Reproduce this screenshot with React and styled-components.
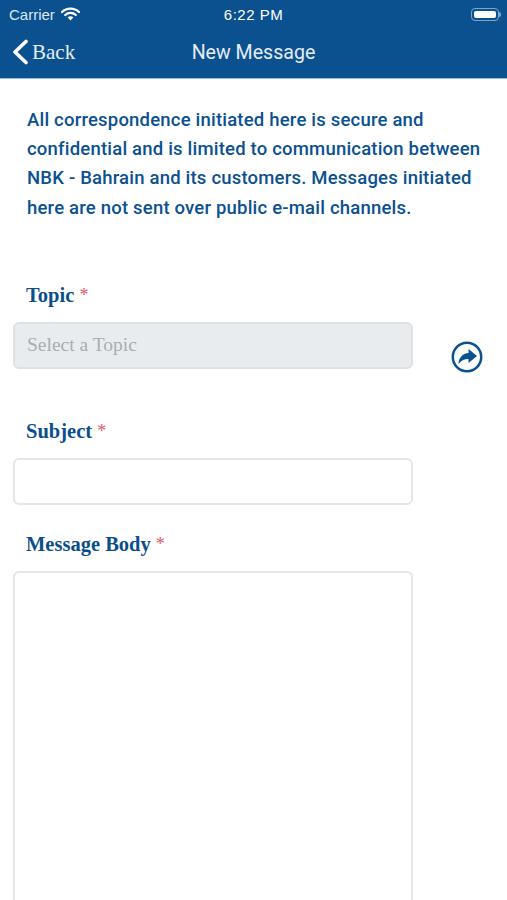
import React from 'react'
import styled, { createGlobalStyle } from 'styled-components'

const GlobalStyle = createGlobalStyle`
  html, body {
    margin: 0;
    padding: 0;
    background: #fff;
  }
`

const App = () => {
  return (
    <>
      <GlobalStyle />
      <Screen>
        <Header>
          <StatusBar>
            <Carrier>
              Carrier
              <svg width="19" height="14" viewBox="0 0 19 14">
                <path d="M1 5a12.2 12.2 0 0 1 17 0" fill="none" stroke="#fff" strokeWidth="2.2" strokeLinecap="round" />
                <path d="M4.2 8a7.6 7.6 0 0 1 10.6 0" fill="none" stroke="#fff" strokeWidth="2.2" strokeLinecap="round" />
                <path d="M6.7 10.4a3.9 3.9 0 0 1 5.6 0L9.5 13.4z" fill="#fff" />
              </svg>
            </Carrier>
            <Clock>6:22 PM</Clock>
            <Battery>
              <BatteryBody><BatteryFill /></BatteryBody>
              <BatteryCap />
            </Battery>
          </StatusBar>
          <NavBar>
            <BackLink>
              <svg width="18" height="26" viewBox="0 0 18 26">
                <path d="M15 2.5 4 13l11 10.500" fill="none" stroke="#fff" strokeWidth="3.6" strokeLinecap="round" strokeLinejoin="round" />
              </svg>
              <BackText>Back</BackText>
            </BackLink>
            <NavTitle>New Message</NavTitle>
          </NavBar>
        </Header>
        <Content>
          <Intro>
            All correspondence initiated here is secure and<br />
            confidential and is limited to communication between<br />
            NBK - Bahrain and its customers. Messages initiated<br />
            here are not sent over public e-mail channels.
          </Intro>
          <FieldLabel $top={60}>Topic <Required>*</Required></FieldLabel>
          <TopicRow>
            <TextBox as="div" $disabled>Select a Topic</TextBox>
            <GoIcon viewBox="0 0 32 32" width="32" height="32">
              <circle cx="16" cy="16" r="14.200" fill="none" stroke="#0b5190" strokeWidth="2.500" />
              <path d="M17.500 8 26 15l-8.500 7v-4c-4.500 0-7.500 1.500-10 5 0-6 4-10.500 10-11z" fill="#0b5190" />
            </GoIcon>
          </TopicRow>
          <FieldLabel $top={46}>Subject <Required>*</Required></FieldLabel>
          <TextBox />
          <FieldLabel $top={27}>Message Body <Required>*</Required></FieldLabel>
          <MessageBox />
        </Content>
      </Screen>
    </>
  )
}

export default App

const Screen = styled.div`
  width: 507px;
  height: 900px;
  overflow: hidden;
  background: #fff;
`
const Header = styled.header`
  background: #0b5190;
  border-bottom: 1px solid #8fc3e8;
  height: 78px;
`
const StatusBar = styled.div`
  display: grid;
  grid-template-columns: 1fr auto 1fr;
  align-items: center;
  height: 28px;
  padding: 0 6px;
  color: #fff;
  font-family: 'Liberation Sans', Arial, sans-serif;
`
const Carrier = styled.div`
  display: flex;
  align-items: center;
  gap: 6px;
  padding-left: 3px;
  font-size: 15px;
  color: #dce8f2;
`
const Clock = styled.div`
  font-size: 15px;
  font-weight: 500;
  letter-spacing: 0.5px;
`
const Battery = styled.div`
  justify-self: end;
  display: flex;
  align-items: center;
`
const BatteryBody = styled.div`
  box-sizing: border-box;
  width: 28px;
  height: 13px;
  padding: 2px;
  border: 1px solid #7fa3c4;
  border-radius: 4px;
`
const BatteryFill = styled.div`
  height: 100%;
  background: #fff;
  border-radius: 2px;
`
const BatteryCap = styled.div`
  width: 2px;
  height: 5px;
  background: #7fa3c4;
  border-radius: 0 2px 2px 0;
`
const NavBar = styled.div`
  display: grid;
  grid-template-columns: 1fr auto 1fr;
  align-items: center;
  height: 48px;
  color: #fff;
`
const BackLink = styled.div`
  display: flex;
  align-items: center;
  gap: 3px;
  padding-left: 11px;
`
const BackText = styled.span`
  font-family: 'Liberation Serif', 'Times New Roman', serif;
  font-size: 21px;
  color: #e4edf5;
`
const NavTitle = styled.div`
  font-family: Roboto, Arial, sans-serif;
  font-size: 19.600px;
  color: #e4edf5;
`
const Content = styled.main`
  padding: 27px 0 0 13px;
`
const Intro = styled.p`
  margin: 0 0 0 14px;
  font-family: Roboto, Arial, sans-serif;
  font-size: 18.500px;
  font-weight: 500;
  letter-spacing: 0.2px;
  line-height: 29.200px;
  color: #0b5190;
  white-space: nowrap;
`
const FieldLabel = styled.div`
  margin: ${p => p.$top}px 0 15px 13px;
  font-family: 'Liberation Serif', 'Times New Roman', serif;
  font-size: 20.500px;
  font-weight: 700;
  line-height: 24px;
  color: #0b4f8a;
`
const Required = styled.span`
  font-size: 18px;
  font-weight: 400;
  vertical-align: 1px;
  color: #e2566c;
`
const TopicRow = styled.div`
  display: flex;
  align-items: flex-start;
  gap: 38px;
`
const TextBox = styled.div`
  box-sizing: border-box;
  width: 400px;
  height: 47px;
  padding-left: 12px;
  display: flex;
  align-items: center;
  border: 2px solid ${p => (p.$disabled ? '#dfe2e5' : '#e5e6e8')};
  border-radius: 6px;
  background: ${p => (p.$disabled ? '#e9ecef' : '#fff')};
  font-family: 'Liberation Serif', 'Times New Roman', serif;
  font-size: 19.500px;
  color: #a9adb1;
`
const GoIcon = styled.svg`
  flex: none;
  margin-top: 19px;
`
const MessageBox = styled.div`
  box-sizing: border-box;
  width: 400px;
  height: 420px;
  border: 2px solid #e5e6e8;
  border-radius: 6px;
  background: #fff;
`
